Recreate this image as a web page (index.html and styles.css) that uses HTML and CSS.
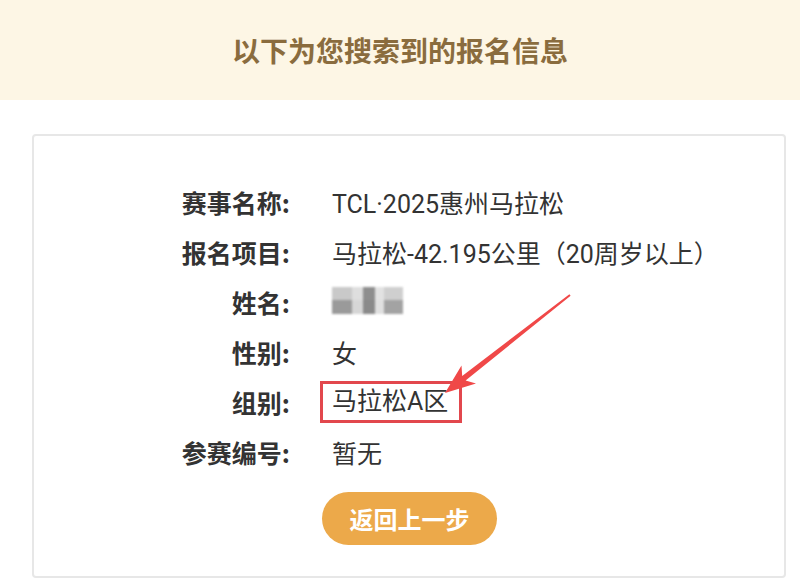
FILE: index.html
```html
<!DOCTYPE html>
<html lang="zh-CN">
<head>
<meta charset="utf-8">
<link rel="stylesheet" href="styles.css">
</head>
<body>
<header class="banner">
  <h1 class="banner-title">以下为您搜索到的报名信息</h1>
</header>
<main class="card">
  <div class="info">
    <div class="label">赛事名称:</div>
    <div class="value">TCL·2025惠州马拉松</div>
    <div class="label">报名项目:</div>
    <div class="value">马拉松-42.195公里（20周岁以上）</div>
    <div class="label">姓名:</div>
    <div class="value">
      <span class="mosaic">
        <span class="m m1"></span><span class="m m2"></span><span class="m m3"></span><span class="m m4"></span><span class="m m5"></span>
        <span class="m m6"></span><span class="m m7"></span><span class="m m8"></span><span class="m m9"></span><span class="m m10"></span>
      </span>
    </div>
    <div class="label">性别:</div>
    <div class="value">女</div>
    <div class="label">组别:</div>
    <div class="value"><span class="highlight">马拉松A区</span></div>
    <div class="label">参赛编号:</div>
    <div class="value">暂无</div>
    <div class="action"><button class="back-btn">返回上一步</button></div>
  </div>
  <svg class="arrow" width="800" height="584" viewBox="0 0 800 584">
    <polygon fill="#f04848" points="445,393 476,383.5 465.6,380.4 570.6,295.8 569.4,294.2 462.2,375.9 461.5,365.5"/>
  </svg>
</main>
</body>
</html>
```
FILE: styles.css
```css
html, body {
  margin: 0;
  padding: 0;
  background: #ffffff;
  font-family: "Roboto", "Noto Sans CJK SC", sans-serif;
  width: 800px;
  height: 584px;
  overflow: hidden;
}
.banner {
  height: 100px;
  background: #fdf6e5;
  display: flex;
  align-items: center;
  justify-content: center;
}
.banner-title {
  margin: 0;
  font-family: "Noto Sans CJK SC", sans-serif;
  font-size: 28px;
  font-weight: 700;
  color: #8a6c3e;
  letter-spacing: 0;
}
.card {
  margin: 34px 14px 0 32px;
  border: 2px solid #e7e7e7;
  border-radius: 4px;
  height: 444px;
  box-sizing: border-box;
  padding-top: 41px;
}
.info {
  display: grid;
  grid-template-columns: 256px 1fr;
  column-gap: 42px;
  grid-auto-rows: 50px;
  align-items: center;
  font-size: 25px;
  color: #333333;
}
.label {
  text-align: right;
  font-family: "Noto Sans CJK SC", sans-serif;
  font-weight: 700;
  color: #333;
}
.value {
  color: #333;
  white-space: nowrap;
}
.mosaic {
  display: inline-grid;
  grid-template-columns: 20px 11px 12px 9px 19px;
  grid-template-rows: 13px 14px;
  vertical-align: middle;
  margin-top: -6px;
  filter: blur(0.8px);
}
.m1 { background: #c9c9c9; }
.m2 { background: #dedede; }
.m3 { background: #8e8e8e; }
.m4 { background: #e2e2e2; }
.m5 { background: #cfcfcf; }
.m6 { background: #9a9a9a; }
.m7 { background: #d6d6d6; }
.m8 { background: #8a8a8a; }
.m9 { background: #e0e0e0; }
.m10 { background: #a3a3a3; }
.highlight {
  display: inline-block;
  margin-left: -12px;
  border: 3px solid #e2474d;
  padding: 0 11px 0 9px;
  line-height: 36px;
}
.action {
  grid-column: 2;
  align-self: start;
  margin-top: 15px;
  margin-left: -10px;
}
.back-btn {
  width: 175px;
  height: 53px;
  border: none;
  border-radius: 27px;
  background: #eca94a;
  color: #ffffff;
  font-family: "Noto Sans CJK SC", sans-serif;
  font-size: 24px;
  font-weight: 700;
  padding: 0;
}
.arrow {
  position: absolute;
  left: 0;
  top: 0;
  pointer-events: none;
}
```
